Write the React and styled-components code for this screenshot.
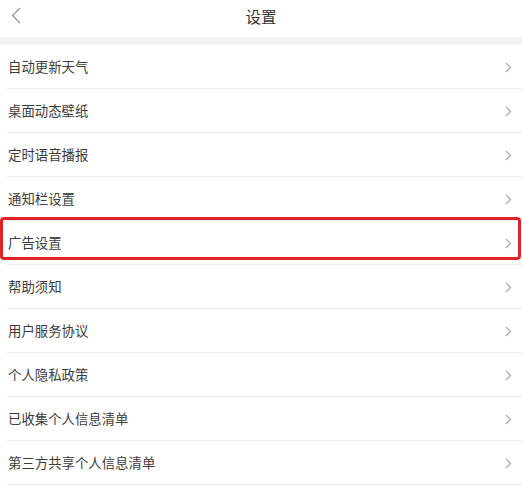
import React from "react";
import styled, { createGlobalStyle } from "styled-components";

const GlobalStyle = createGlobalStyle`
  html, body { margin: 0; padding: 0; background: #ffffff; }
  body { font-family: "Noto Sans CJK SC", "Noto Sans", sans-serif; }
  * { box-sizing: border-box; }
`;

const Page = styled.div`
  width: 522px;
  height: 493px;
  background: #ffffff;
  overflow: hidden;
`;

const Header = styled.header`
  position: relative;
  height: 37px;
  display: flex;
  align-items: flex-start;
  justify-content: center;
  background: #ffffff;
`;

const BackButton = styled.button`
  position: absolute;
  left: 10px;
  top: 6px;
  width: 12px;
  height: 19px;
  padding: 0;
  border: none;
  background: transparent;
  display: flex;
  align-items: center;
  justify-content: center;
`;

const Title = styled.h1`
  margin: 0;
  font-size: 15.5px;
  font-weight: 400;
  line-height: 32px;
  color: #333333;
`;

const Band = styled.div`
  height: 8px;
  background: #f4f4f4;
`;

const List = styled.ul`
  list-style: none;
  margin: 0;
  padding: 0;
`;

const Row = styled.li`
  position: relative;
  height: 44px;
  display: flex;
  align-items: center;
  justify-content: space-between;
  padding: 0 10px 0 8px;
  &::after {
    content: "";
    position: absolute;
    left: 7px;
    right: 0;
    bottom: 0;
    height: 1px;
    background: #ebebeb;
  }
`;

const Label = styled.span`
  font-size: 13.4px;
  color: #3c3c3c;
  line-height: 1;
`;

const Highlight = styled.div`
  position: absolute;
  left: 0;
  right: 1px;
  top: -4px;
  bottom: 5px;
  border: 3px solid #e02424;
  border-radius: 4px;
  pointer-events: none;
`;

const Chevron = () => (
  <svg width="7" height="11" viewBox="0 0 7 11" aria-hidden="true">
    <path d="M1 1 L5.5 5.5 L1 10" fill="none" stroke="#a8a8a8" strokeWidth="1.2" />
  </svg>
);

const items = [
  "自动更新天气",
  "桌面动态壁纸",
  "定时语音播报",
  "通知栏设置",
  "广告设置",
  "帮助须知",
  "用户服务协议",
  "个人隐私政策",
  "已收集个人信息清单",
  "第三方共享个人信息清单",
];

export default function App() {
  return (
    <Page>
      <GlobalStyle />
      <Header>
        <BackButton aria-label="返回">
          <svg width="10" height="17" viewBox="0 0 10 17" aria-hidden="true">
            <path d="M9 1 L1.5 8.5 L9 16" fill="none" stroke="#8a8a8a" strokeWidth="1.1" />
          </svg>
        </BackButton>
        <Title>设置</Title>
      </Header>
      <Band />
      <List>
        {items.map((t) => (
          <Row key={t}>
            <Label>{t}</Label>
            <Chevron />
            {t === "广告设置" && <Highlight />}
          </Row>
        ))}
      </List>
    </Page>
  );
}
